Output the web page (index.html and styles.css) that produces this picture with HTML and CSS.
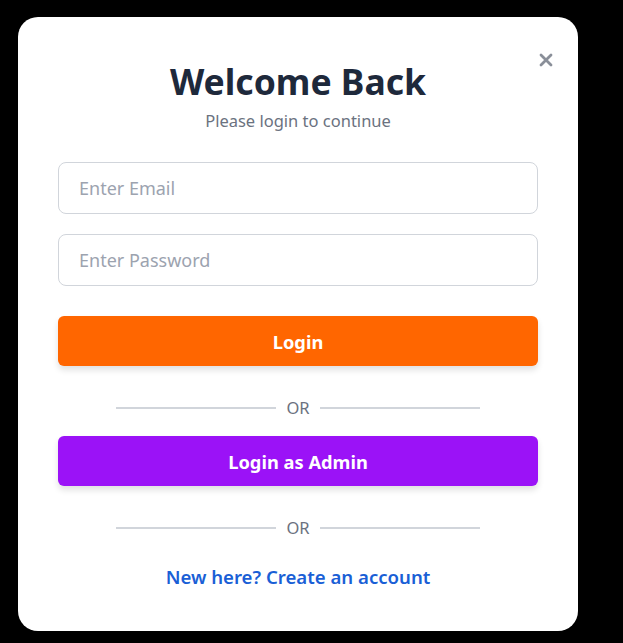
FILE: index.html
```html
<!DOCTYPE html>
<html lang="en">
<head>
<meta charset="utf-8">
<title>Login</title>
<link rel="stylesheet" href="styles.css">
</head>
<body>
<div class="modal">
  <button class="close" aria-label="Close">
    <svg width="14" height="14" viewBox="0 0 14 14"><path d="M2 2L12 12M12 2L2 12" stroke="#8a8f99" stroke-width="2.8" stroke-linecap="round"/></svg>
  </button>
  <h1 class="title">Welcome Back</h1>
  <p class="subtitle">Please login to continue</p>
  <form class="form">
    <input class="field" type="email" placeholder="Enter Email">
    <input class="field field-2" type="password" placeholder="Enter Password">
    <button type="button" class="btn btn-login">Login</button>
    <div class="divider"><span class="line"></span><span class="or">OR</span><span class="line"></span></div>
    <button type="button" class="btn btn-admin">Login as Admin</button>
    <div class="divider"><span class="line"></span><span class="or">OR</span><span class="line"></span></div>
    <a class="link" href="#">New here? Create an account</a>
  </form>
</div>
</body>
</html>
```
FILE: styles.css
```css
* { box-sizing: border-box; }
html, body { margin: 0; background: #000; }
body {
  padding: 17px 18px;
  font-family: "Noto Sans", "Open Sans", sans-serif;
}
.modal {
  position: relative;
  width: 560px;
  height: 614px;
  background: #fff;
  border-radius: 20px;
  padding: 40px 40px 0;
  text-align: center;
}
.close {
  position: absolute;
  top: 36px;
  right: 25px;
  width: 14px;
  height: 14px;
  padding: 0;
  border: 0;
  background: none;
  display: flex;
}
.title {
  margin: 0;
  font-size: 35.5px;
  line-height: 48px;
  font-weight: 700;
  color: #1e293b;
}
.subtitle {
  margin: 4px 0 0;
  font-size: 16.5px;
  line-height: 24px;
  color: #6b7280;
}
.form {
  display: flex;
  flex-direction: column;
  align-items: center;
  margin-top: 29px;
}
.field {
  width: 480px;
  height: 52px;
  border: 1px solid #d1d5db;
  border-radius: 8px;
  padding: 0 20px;
  font-family: inherit;
  font-size: 18px;
  color: #111;
  outline: none;
}
.field::placeholder { color: #9ca3af; }
.field-2 { margin-top: 20px; }
.btn {
  width: 480px;
  height: 50px;
  border: 0;
  border-radius: 6px;
  color: #fff;
  font-family: inherit;
  font-size: 18.3px;
  font-weight: 700;
  box-shadow: 0 4px 6px rgba(0,0,0,0.12);
}
.btn-login { margin-top: 30px; background: #ff6600; }
.btn-admin { margin-top: 16px; background: #9b12f7; }
.divider {
  display: flex;
  align-items: center;
  gap: 10px;
  width: 364px;
  height: 24px;
  margin-top: 30px;
}
.line { flex: 1; height: 2px; background: #d1d5db; }
.or { font-size: 16.5px; line-height: 24px; color: #6b7280; }
.link {
  margin-top: 25px;
  font-size: 18.6px;
  line-height: 24px;
  font-weight: 600;
  color: #1a5fd6;
  text-decoration: none;
}
```
